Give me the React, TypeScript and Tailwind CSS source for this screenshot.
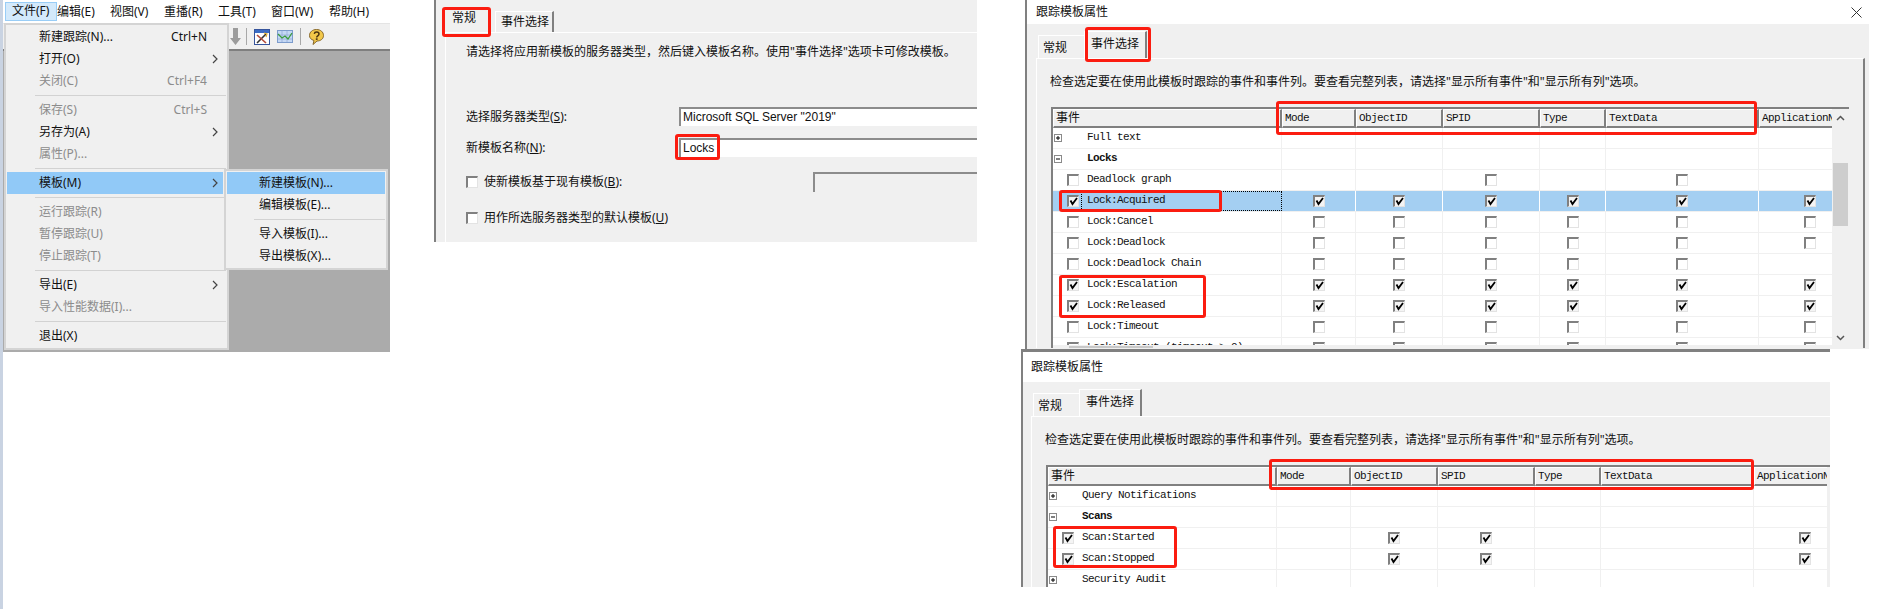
import React from "react";

const UI = "[font-family:'Noto_Sans','Noto_Sans_CJK_SC',sans-serif]";
const MONO = "[font-family:'Liberation_Mono','Noto_Sans_CJK_SC',monospace]";

type Item = { label: React.ReactNode; short?: string; arrow?: boolean; off?: boolean; hot?: boolean };

function Chevron() {
  return (
    <svg width="6" height="10" viewBox="0 0 6 10" className="block">
      <path d="M1 1l4 4-4 4" fill="none" stroke="#444" strokeWidth="1.2" />
    </svg>
  );
}

function MenuRow({ item, right }: { item: Item; right: string }) {
  return (
    <div
      className={`flex h-[22px] items-center pl-[32px] text-[12px] leading-[22px] ml-px whitespace-nowrap ${right} ${
        item.hot ? "bg-[#91c9f7]" : ""
      } ${item.off ? "text-[#8c8c8c]" : "text-[#111]"}`}
    >
      <span className="flex-1">{item.label}</span>
      {item.short && <span>{item.short}</span>}
      <span className="flex w-[16px] shrink-0 justify-center">{item.arrow && <Chevron />}</span>
    </div>
  );
}

function MenuSep({ left }: { left: string }) {
  return (
    <div className={`flex h-[7px] items-center mr-px ${left}`}>
      <div className="h-px w-full bg-[#d2d2d2]" />
    </div>
  );
}

function Toolbar() {
  return (
    <div className="flex h-[28px] items-center border-b-2 border-t border-b-[#7f7f7f] border-t-[#e4e4e4] bg-[#f0f0f0] pl-[227px]">
      <svg width="11" height="18" viewBox="0 0 11 18" className="block">
        <path d="M3 0h5v10h3l-5.500 7L0 10h3z" fill="#9c9c9c" />
      </svg>
      <div className="ml-[5px] h-[17px] w-px bg-[#a8a8a8]" />
      <svg width="16" height="16" viewBox="0 0 16 16" className="ml-[7px] block">
        <rect x="0.500" y="0.500" width="15" height="15" fill="#fff" stroke="#36549c" />
        <rect x="1" y="1" width="14" height="3" fill="#3c6cc4" />
        <path d="M3 14L12 5" stroke="#333" strokeWidth="1.600" />
        <path d="M3 6l9 8" stroke="#b34a3a" strokeWidth="1.600" />
        <path d="M10 4l3 1-1 3" stroke="#e0b030" strokeWidth="1.200" fill="none" />
      </svg>
      <svg width="16" height="13" viewBox="0 0 16 13" className="ml-[7px] block">
        <rect x="0.500" y="0.500" width="15" height="12" fill="#c4d8f4" stroke="#7d9ccc" />
        <path d="M1 5h14M1 9h14M5 1v11M10 1v11" stroke="#8fa8d4" strokeWidth="0.700" />
        <path d="M1 4l4 4 3-2 3 3 4-6" fill="none" stroke="#3c9c3c" strokeWidth="1.300" />
      </svg>
      <div className="ml-[7px] h-[17px] w-px bg-[#a8a8a8]" />
      <svg width="15" height="16" viewBox="0 0 15 16" className="ml-[8px] block">
        <path d="M7.500 0.500C11.500 0.500 14.500 3 14.500 6.500S11.500 12 8 12L4 15.500 5 11.500C2 10.500 0.500 9 0.500 6.500 0.500 3 3.500 0.500 7.500 0.500z" fill="#f2c84a" stroke="#86672a" />
        <path d="M5.300 4.800C5.600 2.500 10 2.500 10 5c0 1.800-2.300 1.800-2.300 3.500" fill="none" stroke="#4a3410" strokeWidth="1.500" />
        <rect x="6.800" y="9.300" width="1.800" height="1.600" fill="#4a3410" />
      </svg>
    </div>
  );
}

const topMenus = [
  { t: "文件(F)", c: "w-[52px] pl-[6px] bg-[#d3e9fb] border border-[#99cdf6] -mt-px h-[19px]" },
  { t: "编辑(E)", c: "w-[53px]" },
  { t: "视图(V)", c: "w-[54px]" },
  { t: "重播(R)", c: "w-[54px]" },
  { t: "工具(T)", c: "w-[53px]" },
  { t: "窗口(W)", c: "w-[58px]" },
  { t: "帮助(H)", c: "w-[56px]" },
];

const group1: Item[] = [
  { label: "新建跟踪(N)...", short: "Ctrl+N" },
  { label: "打开(O)", arrow: true },
  { label: "关闭(C)", short: "Ctrl+F4", off: true },
];
const group2: Item[] = [
  { label: "保存(S)", short: "Ctrl+S", off: true },
  { label: "另存为(A)", arrow: true },
  { label: "属性(P)...", off: true },
];
const group3: Item[] = [
  { label: "运行跟踪(R)", off: true },
  { label: "暂停跟踪(U)", off: true },
  { label: "停止跟踪(T)", off: true },
];

function MenuPanel() {
  return (
    <div className={`absolute left-[3px] top-0 flex h-[352px] w-[387px] flex-col bg-white ${UI}`}>
      <div className="flex h-[23px] items-center pl-[2px] text-[12px] text-[#111]">
        {topMenus.map((m) => (
          <span key={m.t} className={`flex items-center whitespace-nowrap ${m.c}`}>
            {m.t}
          </span>
        ))}
      </div>
      <Toolbar />
      <div className="flex-1 bg-[#ababab]" />

      <div className="absolute left-px top-[23px] h-[327px] w-[225px] border-2 border-[#d4d4d4] bg-[#f0f0f0] pt-px">
        {group1.map((i, n) => (
          <MenuRow key={n} item={i} right="mr-[4px]" />
        ))}
        <MenuSep left="ml-[29px]" />
        {group2.map((i, n) => (
          <MenuRow key={n} item={i} right="mr-[4px]" />
        ))}
        <MenuSep left="ml-[29px]" />
        <MenuRow item={{ label: "模板(M)", arrow: true, hot: true }} right="mr-[4px]" />
        <MenuSep left="ml-[29px]" />
        {group3.map((i, n) => (
          <MenuRow key={n} item={i} right="mr-[4px]" />
        ))}
        <MenuSep left="ml-[29px]" />
        <MenuRow item={{ label: "导出(E)", arrow: true }} right="mr-[4px]" />
        <MenuRow item={{ label: "导入性能数据(I)...", off: true }} right="mr-[4px]" />
        <MenuSep left="ml-[29px]" />
        <MenuRow item={{ label: "退出(X)" }} right="mr-[4px]" />
      </div>

      <div className="absolute left-[221px] top-[169px] h-[101px] w-[164px] border-2 border-[#d4d4d4] bg-[#f0f0f0] pt-px">
        <MenuRow item={{ label: "新建模板(N)...", hot: true }} right="mr-px" />
        <MenuRow item={{ label: "编辑模板(E)..." }} right="mr-px" />
        <MenuSep left="ml-[28px]" />
        <MenuRow item={{ label: "导入模板(I)..." }} right="mr-px" />
        <MenuRow item={{ label: "导出模板(X)..." }} right="mr-px" />
      </div>
    </div>
  );
}

function Check({ on }: { on: boolean }) {
  return (
    <div className={`box-border h-[12px] w-[12px] shrink-0 border-t-2 border-l-2 border-b border-r border-t-[#808080] border-l-[#808080] border-b-[#e3e3e3] border-r-[#e3e3e3] ${on ? "bg-[#f4f4f4]" : "bg-white"}`}>
      {on && (
        <svg width="9" height="9" viewBox="0 0 9 9" className="block">
          <path d="M1.500 3.500L3.500 7 8 1" fill="none" stroke="#000" strokeWidth="1.800" />
        </svg>
      )}
    </div>
  );
}

function NewTemplatePanel() {
  return (
    <div className={`absolute left-[434px] top-0 h-[242px] w-[543px] overflow-hidden border-l-2 border-[#808080] bg-[#f0f0f0] text-[12px] text-[#111] ${UI}`}>
      <div className="flex h-[32px] items-end pl-[9px]">
        <div className="h-[25px] w-[46px] pl-[7px] pt-[2px] leading-[18px]">常规</div>
        <div className="ml-[4px] h-[21px] w-[59px] border-l border-t border-r-2 border-l-white border-t-white border-r-[#808080] pl-[5px] leading-[20px]">事件选择</div>
      </div>
      <div className="ml-[9px] h-[210px] border-l border-t border-white pl-[20px] pt-[11px]">
        <div className="h-[16px] leading-[16px] whitespace-nowrap">请选择将应用新模板的服务器类型，然后键入模板名称。使用"事件选择"选项卡可修改模板。</div>
        <div className="mt-[47px] flex h-[19px] items-center">
          <div className="w-[213px] shrink-0">选择服务器类型(<u>S</u>):</div>
          <div className="h-[19px] flex-1 border-t-2 border-l-2 border-[#8c8c8c] bg-white pl-[2px] leading-[17px] [font-family:'Liberation_Sans',sans-serif]">Microsoft SQL Server "2019"</div>
        </div>
        <div className="mt-[12px] flex h-[19px] items-center">
          <div className="w-[213px] shrink-0">新模板名称(<u>N</u>):</div>
          <div className="h-[19px] flex-1 border-t-2 border-l-2 border-[#8c8c8c] bg-white pl-[2px] leading-[17px] [font-family:'Liberation_Sans',sans-serif]">Locks</div>
        </div>
        <div className="mt-[15px] flex h-[20px] items-center">
          <Check on={false} />
          <div className="ml-[6px]">使新模板基于现有模板(<u>B</u>):</div>
          <div className="ml-auto h-[20px] w-[164px] border-t-2 border-l-2 border-[#8c8c8c]" />
        </div>
        <div className="mt-[16px] flex h-[20px] items-center">
          <Check on={false} />
          <div className="ml-[6px]">用作所选服务器类型的默认模板(<u>U</u>)</div>
        </div>
      </div>
    </div>
  );
}

const colW = ["w-[74px]", "w-[87px]", "w-[97px]", "w-[66px]", "w-[153px]", "w-[103px]"];
const colNames = ["Mode", "ObjectID", "SPID", "Type", "TextData", "ApplicationN"];

type Row = {
  name: string;
  kind?: "plus" | "minus";
  checked?: boolean;
  cols?: (number | null)[];
  selected?: boolean;
};

function Expander({ kind }: { kind: "plus" | "minus" }) {
  return (
    <svg width="8" height="8" viewBox="0 0 8 8" className="ml-px block">
      <rect x="0.500" y="0.500" width="7" height="7" fill="#fff" stroke="#8a8a8a" />
      <path d="M2 4h4" stroke="#000" />
      {kind === "plus" && <path d="M4 2v4" stroke="#000" />}
    </svg>
  );
}

function EventRow({ row }: { row: Row }) {
  const line = row.selected ? "border-r-white" : "border-r-[#f0f0f0]";
  return (
    <div className={`flex h-[21px] border-b border-[#f0f0f0] ${row.selected ? "bg-[#a4cff2]" : "bg-white"}`}>
      <div className={`flex w-[229px] shrink-0 items-center ${row.selected ? "" : "border-r border-r-[#f0f0f0]"}`}>
        <div className="flex w-[28px] shrink-0 items-center">
          {row.kind ? (
            <Expander kind={row.kind} />
          ) : (
            <div className="ml-[14px]">
              <Check on={!!row.checked} />
            </div>
          )}
        </div>
        <div
          className={`flex h-full flex-1 items-center border pl-[5px] pb-[2px] whitespace-nowrap ${MONO} text-[11px] tracking-[-0.6px] ${
            row.selected ? "border-dotted border-black" : "border-transparent"
          } ${row.kind === "minus" ? "font-bold" : ""}`}
        >
          {row.name}
        </div>
      </div>
      {colW.map((w, i) => (
        <div key={i} className={`flex shrink-0 items-center justify-center border-r ${w} ${line}`}>
          {row.cols && row.cols[i] !== null && <Check on={row.cols[i] === 1} />}
        </div>
      ))}
    </div>
  );
}

function EventGrid({ rows, thumb }: { rows: Row[]; thumb: boolean }) {
  return (
    <div className="flex h-[241px] w-[798px] border-t-2 border-l-2 border-[#808080]">
      <div className="w-[779px] shrink-0 overflow-hidden">
        <div className="flex h-[19px] w-[809px]">
          <div className="flex w-[229px] shrink-0 items-center border-t border-l border-r-2 border-b-2 border-t-white border-l-white border-r-[#808080] border-b-[#808080] bg-[#f0f0f0] pl-[2px] text-[12px]">
            事件
          </div>
          {colNames.map((n, i) => (
            <div key={n} className={`flex shrink-0 items-center border-t border-l border-r-2 border-b-2 border-t-white border-l-white border-r-[#808080] border-b-[#808080] bg-[#f0f0f0] pl-[2px] whitespace-nowrap ${colW[i]} ${MONO} text-[11px] tracking-[-0.6px]`}>
              {n}
            </div>
          ))}
        </div>
        <div className="h-[217px] w-[809px] overflow-hidden bg-white">
          {rows.map((r) => (
            <EventRow key={r.name} row={r} />
          ))}
        </div>
        <div className="h-[3px] pt-px">
          <div className="ml-[16px] h-[2px] w-[84px] bg-[#c8c8c8]" />
        </div>
      </div>
      <div className="flex w-[17px] shrink-0 flex-col pb-[2px] pl-px">
        <div className="flex h-[17px] items-center justify-center pr-[2px]">
          <svg width="9" height="6" viewBox="0 0 9 6" className="block">
            <path d="M1 5l3.500-3.500L8 5" fill="none" stroke="#555" strokeWidth="1.500" />
          </svg>
        </div>
        {thumb && <div className="mt-[37px] h-[63px] w-[15px] bg-[#cdcdcd]" />}
        <div className="mt-auto flex h-[17px] items-center justify-center pr-[2px]">
          <svg width="9" height="6" viewBox="0 0 9 6" className="block">
            <path d="M1 1l3.500 3.500L8 1" fill="none" stroke="#555" strokeWidth="1.500" />
          </svg>
        </div>
      </div>
    </div>
  );
}

function TraceWindow({
  frame,
  titleH,
  indent,
  rows,
  thumb,
  close,
}: {
  frame: string;
  titleH: string;
  indent: string;
  rows: Row[];
  thumb: boolean;
  close: boolean;
}) {
  return (
    <div className={`absolute overflow-hidden bg-[#f0f0f0] text-[#111] text-[12px] ${UI} ${frame}`}>
      <div className={`flex items-center justify-between bg-white ${titleH}`}>
        <span className={`text-[12px] ${indent}`}>跟踪模板属性</span>
        {close && (
          <svg width="11" height="11" viewBox="0 0 11 11" className="mr-[7px] block">
            <path d="M0.500 0.500l10 10M10.500 0.500l-10 10" stroke="#333" strokeWidth="1" />
          </svg>
        )}
      </div>
      <div className={`flex h-[34px] items-end pl-[2px] ${indent}`}>
        <div className="h-[23px] w-[46px] border-l border-t border-white pl-[4px] leading-[23px]">常规</div>
        <div className="h-[27px] w-[63px] border-l border-t border-r-2 border-l-white border-t-white border-r-[#808080] pl-[6px] leading-[24px]">事件选择</div>
      </div>
      <div className={`w-[829px] border-t border-l border-r-2 border-t-white border-l-white border-r-[#808080] pl-[14px] ${indent}`}>
        <div className="-ml-px pt-[15px] leading-[16px] whitespace-nowrap">检查选定要在使用此模板时跟踪的事件和事件列。要查看完整列表，请选择"显示所有事件"和"显示所有列"选项。</div>
        <div className="mt-[17px]">
          <EventGrid rows={rows} thumb={thumb} />
        </div>
      </div>
    </div>
  );
}

const all = (v: number): (number | null)[] => [v, v, v, v, v, v];

const lockRows: Row[] = [
  { name: "Full text", kind: "plus" },
  { name: "Locks", kind: "minus" },
  { name: "Deadlock graph", cols: [null, null, 0, null, 0, null] },
  { name: "Lock:Acquired", checked: true, cols: all(1), selected: true },
  { name: "Lock:Cancel", cols: all(0) },
  { name: "Lock:Deadlock", cols: all(0) },
  { name: "Lock:Deadlock Chain", cols: [0, 0, 0, 0, 0, null] },
  { name: "Lock:Escalation", checked: true, cols: all(1) },
  { name: "Lock:Released", checked: true, cols: all(1) },
  { name: "Lock:Timeout", cols: all(0) },
  { name: "Lock:Timeout (timeout > 0)", cols: all(0) },
];

const scanRows: Row[] = [
  { name: "Query Notifications", kind: "plus" },
  { name: "Scans", kind: "minus" },
  { name: "Scan:Started", checked: true, cols: [null, 1, 1, null, null, 1] },
  { name: "Scan:Stopped", checked: true, cols: [null, 1, 1, null, null, 1] },
  { name: "Security Audit", kind: "plus" },
];

const red = "absolute rounded-[3px] border-[3px] border-[#fb1c10]";

export default function App() {
  return (
    <div className="relative h-[609px] w-[1887px] overflow-hidden bg-white">
      <div className="absolute left-0 top-0 h-full w-[3px] bg-[#c9d3e2]" />
      <MenuPanel />
      <NewTemplatePanel />
      <TraceWindow
        frame="left-[1025px] top-0 h-[349px] w-[844px] border-l-2 border-[#808080]"
        titleH="h-[24px]"
        indent="ml-[9px]"
        rows={lockRows}
        thumb
        close
      />
      <TraceWindow
        frame="left-[1021px] top-[349px] h-[238px] w-[809px] border-l-2 border-t-[3px] border-[#808080]"
        titleH="h-[30px]"
        indent="ml-[8px]"
        rows={scanRows}
        thumb={false}
        close={false}
      />
      <div className={`${red} left-[442px] top-[7px] h-[30px] w-[49px]`} />
      <div className={`${red} left-[675px] top-[134px] h-[26px] w-[45px]`} />
      <div className={`${red} left-[1085px] top-[27px] h-[35px] w-[66px]`} />
      <div className={`${red} left-[1276px] top-[101px] h-[34px] w-[481px]`} />
      <div className={`${red} left-[1059px] top-[190px] h-[22px] w-[163px]`} />
      <div className={`${red} left-[1059px] top-[275px] h-[43px] w-[147px]`} />
      <div className={`${red} left-[1269px] top-[459px] h-[31px] w-[485px]`} />
      <div className={`${red} left-[1053px] top-[526px] h-[42px] w-[124px]`} />
    </div>
  );
}
